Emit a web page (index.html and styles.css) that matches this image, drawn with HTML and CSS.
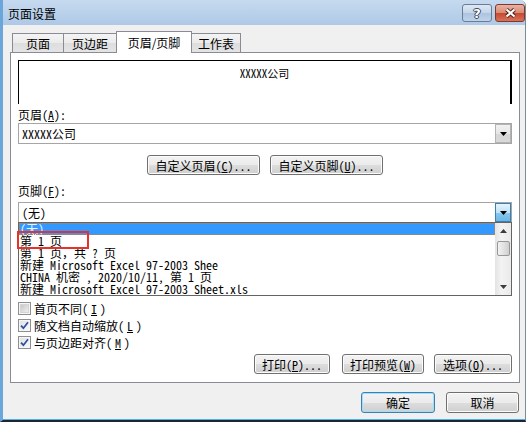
FILE: index.html
```html
<!DOCTYPE html>
<html lang="zh-CN">
<head>
  <meta charset="UTF-8">
  <title>页面设置</title>
  <link rel="stylesheet" href="styles.css">
</head>
<body>
  <div class="window">
    <div class="titlebar">
      <span class="title">页面设置</span>
      <div class="caps">
        <span class="cap help">?</span>
        <span class="cap close">
          <svg width="13" height="10" viewBox="0 0 13 10">
            <path d="M2.5 1.5 L10.5 8.5 M10.5 1.5 L2.5 8.5" stroke="#4a1d16" stroke-width="4" fill="none"/>
            <path d="M2.5 1.5 L10.5 8.5 M10.5 1.5 L2.5 8.5" stroke="#fff" stroke-width="2.2" fill="none"/>
          </svg>
        </span>
      </div>
    </div>

    <div class="client">
      <div class="tabs">
        <div class="tab t1">页面</div>
        <div class="tab t2">页边距</div>
        <div class="tab t3 active">页眉/页脚</div>
        <div class="tab t4">工作表</div>
      </div>

      <div class="panel">
        <div class="preview">XXXXX公司</div>

        <div class="label">页眉(<u>A</u>):</div>
        <div class="combo">
          <span>XXXXX公司</span>
          <span class="drop">
            <svg width="7" height="4" viewBox="0 0 7 4"><path d="M0 0h7l-3.5 4z"/></svg>
          </span>
        </div>

        <div class="custom-row">
          <button class="btn custom">自定义页眉(<u>C</u>)...</button>
          <button class="btn custom">自定义页脚(<u>U</u>)...</button>
        </div>

        <div class="label footer-label">页脚(<u>F</u>):</div>
        <div class="combo footer-combo">
          <span>(无)</span>
          <span class="drop hot">
            <svg width="7" height="4" viewBox="0 0 7 4"><path d="M0 0h7l-3.5 4z"/></svg>
          </span>

          <div class="list">
            <div class="options">
              <div class="opt selected">(无)</div>
              <div class="opt">第 1 页</div>
              <div class="opt">第 1 页，共 ? 页</div>
              <div class="opt">新建 Microsoft Excel 97-2003 Shee</div>
              <div class="opt">CHINA 机密 , 2020/10/11,  第 1 页</div>
              <div class="opt">新建 Microsoft Excel 97-2003 Sheet.xls</div>
            </div>
            <div class="scrollbar">
              <span class="sb-btn">
                <svg width="7" height="4" viewBox="0 0 7 4"><path d="M0 4h7l-3.5-4z" fill="#3c3c3c"/></svg>
              </span>
              <span class="thumb"></span>
              <span class="sb-btn down">
                <svg width="7" height="4" viewBox="0 0 7 4"><path d="M0 0h7l-3.5 4z" fill="#3c3c3c"/></svg>
              </span>
            </div>
            <div class="mark"></div>
          </div>
        </div>

        <div class="checks">
          <label class="check">
            <span class="box off"><span class="inner"></span></span>
            首页不同(<u>I</u>)
          </label>
          <label class="check">
            <span class="box">
              <svg width="9" height="9" viewBox="0 0 9 9"><path d="M1 4.6 L3.4 7.2 L8 1.2" stroke="#2c4f9e" stroke-width="1.7" fill="none"/></svg>
            </span>
            随文档自动缩放(<u>L</u>)
          </label>
          <label class="check">
            <span class="box">
              <svg width="9" height="9" viewBox="0 0 9 9"><path d="M1 4.6 L3.4 7.2 L8 1.2" stroke="#2c4f9e" stroke-width="1.7" fill="none"/></svg>
            </span>
            与页边距对齐(<u>M</u>)
          </label>
        </div>

        <div class="actions">
          <button class="btn print">打印(<u>P</u>)...</button>
          <button class="btn preview-btn">打印预览(<u>W</u>)</button>
          <button class="btn options-btn">选项(<u>O</u>)...</button>
        </div>
      </div>

      <div class="dialog-buttons">
        <button class="btn ok">确定</button>
        <button class="btn cancel">取消</button>
      </div>
    </div>
  </div>
</body>
</html>
```

FILE: styles.css
```css
body {
  margin: 0;
  background: #fff;
  color: #000;
  font-family: "Noto Sans Mono CJK SC", "Noto Sans CJK SC", sans-serif;
  font-size: 12px;
}
u {
  text-decoration: underline;
  text-underline-offset: 1px;
}
.window {
  width: 526px;
  height: 422px;
  box-sizing: border-box;
  display: flex;
  flex-direction: column;
  background: #f0f0f0;
  border-left: 3px solid #6aa6da;
  border-right: 1px solid #7c8b99;
  border-bottom: 2px solid #1a2633;
  border-top-right-radius: 6px;
  overflow: hidden;
}

/* title bar */
.titlebar {
  height: 25px;
  flex-shrink: 0;
  display: flex;
  align-items: flex-start;
  background: linear-gradient(#c6daef, #aec9e6);
}
.title {
  padding-left: 5px;
  line-height: 27px;
  font-family: "Noto Sans CJK SC", sans-serif;
}
.caps {
  margin-left: auto;
  margin-top: 4px;
  display: flex;
  gap: 3px;
}
.cap {
  width: 30px;
  height: 18px;
  box-sizing: border-box;
  border: 1px solid #6a7d95;
  border-radius: 3px;
  display: flex;
  align-items: center;
  justify-content: center;
}
.cap.help {
  background: linear-gradient(#dde8f4 0, #c3d5e9 50%, #adc3de 51%, #bfd3ea 100%);
  color: #fff;
  font-family: "DejaVu Sans", sans-serif;
  font-weight: bold;
  font-size: 13px;
  text-shadow: 1px 0 #37465a, -1px 0 #37465a, 0 1px #37465a, 0 -1px #37465a;
}
.cap.close {
  background: linear-gradient(#eab1a3 0, #d98a74 50%, #c5492f 51%, #d7735a 100%);
  border-color: #7d3a2c;
}

/* client */
.client {
  flex: 1;
  display: flex;
  flex-direction: column;
  padding-top: 6px;
  border-bottom: 1px solid #4fb0e3;
}
.tabs {
  display: flex;
  align-items: flex-end;
  height: 21px;
  margin-left: 9px;
  position: relative;
  z-index: 1;
  font-family: "Noto Sans CJK SC", sans-serif;
}
.tab {
  height: 19px;
  box-sizing: border-box;
  border: 1px solid #898c95;
  border-bottom: none;
  margin-right: -1px;
  background: linear-gradient(#f4f4f4 0, #ebebeb 50%, #dddddd 51%, #e4e4e4 100%);
  text-align: center;
  line-height: 19px;
}
.t1 { width: 52px; }
.t2 { width: 54px; }
.t3 { width: 76px; }
.t4 { width: 50px; }
.tab.active {
  height: 22px;
  margin-bottom: -1px;
  background: #fff;
  line-height: 21px;
}

.panel {
  margin-left: 7px;
  width: 510px;
  box-sizing: border-box;
  border: 1px solid #898c95;
  background: #fff;
  padding: 7px 7px 8px;
}
.preview {
  height: 44px;
  box-sizing: border-box;
  border-top: 1px solid #000;
  border-left: 1px solid #000;
  border-right: 2px solid #000;
  padding-top: 6px;
  text-align: center;
  font-size: 11px;
  line-height: 13px;
}
.label {
  margin-top: 4px;
  height: 14px;
  line-height: 14px;
}
.combo {
  margin-top: 1px;
  height: 21px;
  box-sizing: border-box;
  border: 1px solid #a5a5a5;
  background: #fff;
  display: flex;
  align-items: center;
  padding-left: 3px;
  line-height: 14px;
}
.drop {
  margin-left: auto;
  width: 16px;
  height: 19px;
  box-sizing: border-box;
  border: 1px solid #b4b4b4;
  background: linear-gradient(#f2f2f2 0, #e6e6e6 50%, #d6d6d6 51%, #d9d9d9 100%);
  display: flex;
  align-items: center;
  justify-content: center;
}
.drop.hot {
  border-color: #3c7fb1;
  background: linear-gradient(#e6f4fc 0, #bfe3f8 50%, #8ac9ef 51%, #6db6e5 100%);
}

.custom-row {
  margin-top: 11px;
  display: flex;
  justify-content: center;
  gap: 10px;
}
.btn {
  height: 20px;
  box-sizing: border-box;
  border: 1px solid #707070;
  border-radius: 3px;
  background: linear-gradient(#f3f3f3 0, #ebebeb 50%, #dddddd 51%, #cfcfcf 100%);
  box-shadow: inset 0 0 0 1px #fbfbfb;
  font: inherit;
  color: #000;
  padding: 0;
  line-height: 17px;
}
.custom { width: 113px; }

.footer-label { margin-top: 9px; }
.footer-combo {
  margin-top: 4px;
  position: relative;
}
.list {
  position: absolute;
  top: 19px;
  left: -1px;
  width: 494px;
  height: 74px;
  box-sizing: border-box;
  border: 1px solid #646464;
  background: #fff;
  display: flex;
  z-index: 2;
}
.options {
  flex: 1;
  padding-left: 1px;
}
.opt {
  height: 12px;
  line-height: 12px;
  white-space: nowrap;
}
.opt.selected {
  margin-left: -1px;
  padding-left: 1px;
  background: #3399ff;
  color: #e8f2ff;
  outline: 1px dotted #c77f3a;
  outline-offset: -1px;
}
.scrollbar {
  width: 16px;
  display: flex;
  flex-direction: column;
  align-items: center;
  background: linear-gradient(90deg, #e3e3e3, #f3f3f3 40%, #eaeaea);
}
.sb-btn {
  height: 16px;
  width: 16px;
  display: flex;
  align-items: center;
  justify-content: center;
}
.sb-btn.down { margin-top: auto; }
.thumb {
  margin-top: 2px;
  width: 13px;
  height: 15px;
  box-sizing: border-box;
  border: 1px solid #979797;
  border-radius: 2px;
  background: linear-gradient(90deg, #f2f2f2, #e2e2e2 50%, #cfcfcf);
}
.mark {
  position: absolute;
  left: -2px;
  top: 8px;
  width: 72px;
  height: 18px;
  box-sizing: border-box;
  border: 2px solid #e8312b;
}

.checks {
  margin-top: 77px;
}
.check {
  height: 17px;
  display: flex;
  align-items: center;
  gap: 3px;
  line-height: 14px;
}
.box {
  width: 13px;
  height: 13px;
  box-sizing: border-box;
  border: 1px solid #8e8f8f;
  background: linear-gradient(135deg, #e0e0e0, #fbfbfb);
  box-shadow: inset 0 0 0 1px #f6f6f6;
  display: flex;
  align-items: center;
  justify-content: center;
}
.box .inner {
  width: 7px;
  height: 7px;
  background: linear-gradient(135deg, #c8c8c8, #eeeeee);
  border: 1px solid #d4d4d4;
}

.actions {
  margin-top: 3px;
  display: flex;
  justify-content: flex-end;
}
.print { width: 76px; }
.preview-btn { width: 82px; margin-left: 12px; }
.options-btn { width: 78px; margin-left: 10px; }

.dialog-buttons {
  margin-top: 9px;
  margin-right: 6px;
  display: flex;
  justify-content: flex-end;
  gap: 11px;
}
.dialog-buttons .btn { height: 21px; line-height: 18px; }
.ok {
  width: 74px;
  border-color: #3c7fb1;
  box-shadow: inset 0 0 0 1px #9ee0fb;
}
.cancel { width: 73px; }
```
